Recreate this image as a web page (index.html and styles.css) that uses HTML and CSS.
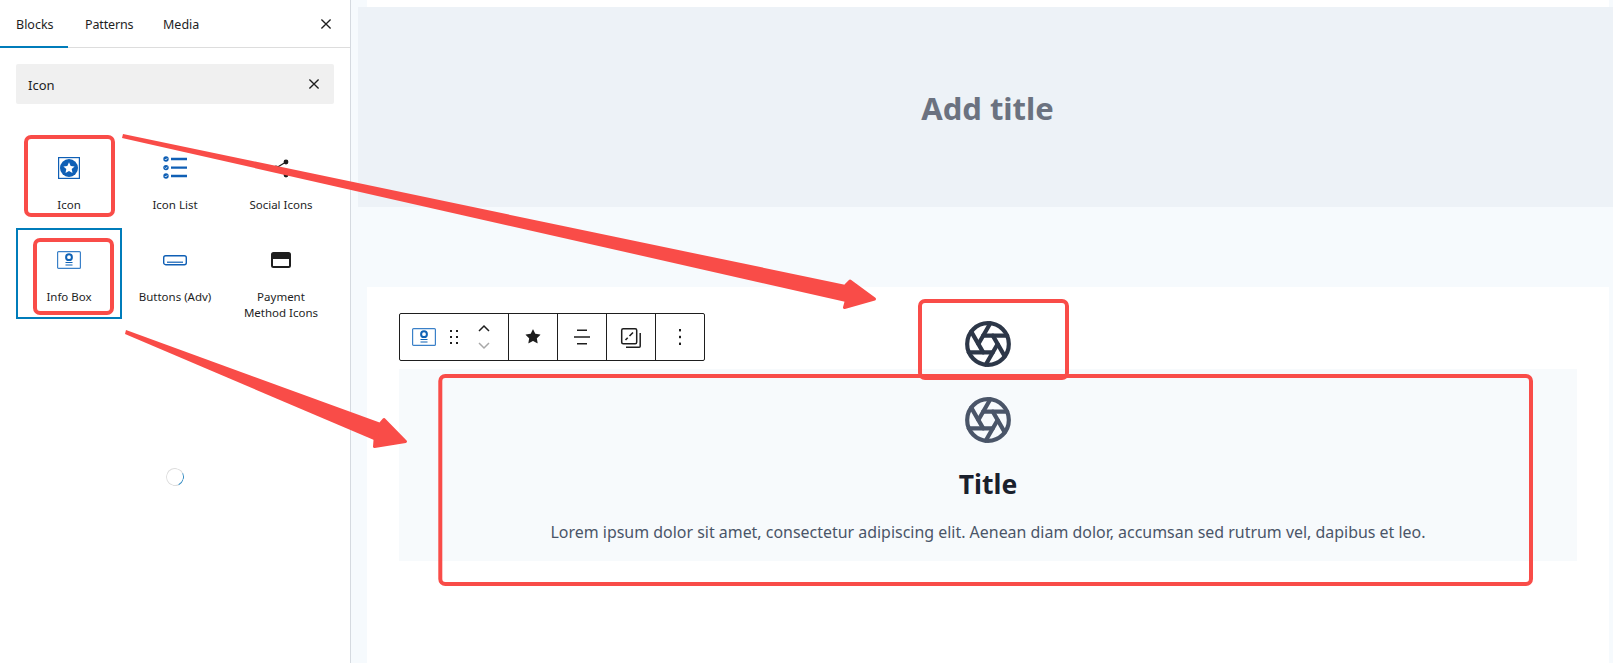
FILE: index.html
```html
<!DOCTYPE html>
<html lang="en">
<head>
<meta charset="utf-8">
<title>Block inserter</title>
<link rel="stylesheet" href="styles.css">
</head>
<body>
<svg class="defs" width="0" height="0" aria-hidden="true">
  <symbol id="aperture" viewBox="0 0 24 24">
    <g fill="none" stroke="currentColor" stroke-width="2" stroke-linecap="round" stroke-linejoin="round">
      <circle cx="12" cy="12" r="10"/>
      <line x1="14.31" y1="8" x2="20.05" y2="17.94"/>
      <line x1="9.69" y1="8" x2="21.17" y2="8"/>
      <line x1="7.38" y1="12" x2="13.12" y2="2.06"/>
      <line x1="9.69" y1="16" x2="3.95" y2="6.06"/>
      <line x1="14.31" y1="16" x2="2.83" y2="16"/>
      <line x1="16.62" y1="12" x2="10.88" y2="21.94"/>
    </g>
  </symbol>
  <symbol id="close" viewBox="0 0 24 24">
    <path d="M6.5 6.5l11 11M17.5 6.5l-11 11" fill="none" stroke="currentColor" stroke-width="1.6"/>
  </symbol>
  <symbol id="infobox" viewBox="0 0 24 18">
    <rect x=".6" y=".6" width="22.8" height="16.8" rx="1" fill="#fff" stroke="#3a80c8" stroke-width="1.2"/>
    <circle cx="12" cy="6.2" r="2.9" fill="none" stroke="#0f62b5" stroke-width="2"/>
    <path d="M8.5 11.5h7M8.5 14h7" stroke="#0f62b5" stroke-width="1.2"/>
  </symbol>
</svg>

<div class="app">
  <aside class="sidebar">
    <div class="tabs">
      <div class="tab tab-active">Blocks</div>
      <div class="tab tab-patterns">Patterns</div>
      <div class="tab tab-media">Media</div>
      <svg class="tab-close" width="20" height="20"><use href="#close"/></svg>
    </div>
    <div class="search">
      <span>Icon</span>
      <svg width="20" height="20"><use href="#close"/></svg>
    </div>
    <div class="grid">
      <div class="item">
        <svg class="item-icon" width="24" height="24" viewBox="0 0 24 24">
          <rect x="1.6" y="1.6" width="20.8" height="20.8" fill="#fff" stroke="#0f5fb5" stroke-width="1.2"/>
          <circle cx="12" cy="12" r="9" fill="#0f5fb5"/>
          <path d="M12 6.3l1.7 3.6 3.9.5-2.9 2.7.8 3.9-3.5-2-3.5 2 .8-3.9-2.9-2.7 3.9-.5z" fill="#fff"/>
        </svg>
        <div class="item-label">Icon</div>
      </div>
      <div class="item">
        <svg class="item-icon" width="24" height="24" viewBox="0 0 24 24">
          <g fill="#0f5fb5">
            <circle cx="3" cy="3" r="2.7"/><circle cx="3" cy="11.6" r="2.7"/><circle cx="3" cy="20" r="2.7"/>
          </g>
          <path d="M1.8 3l1 1 1.5-1.8M1.8 11.6l1 1 1.5-1.8M1.8 20l1 1 1.5-1.8" fill="none" stroke="#fff" stroke-width=".8"/>
          <path d="M8 3h16M8 11.6h16M8 20h16" stroke="#0f5fb5" stroke-width="2.4"/>
        </svg>
        <div class="item-label">Icon List</div>
      </div>
      <div class="item">
        <svg class="item-icon" width="24" height="24" viewBox="0 0 24 24">
          <g fill="#1e1e1e"><circle cx="17" cy="6" r="2.4"/><circle cx="7" cy="12" r="2.4"/><circle cx="17" cy="19" r="2.4"/></g>
          <path d="M17 6L7 12l10 7" fill="none" stroke="#1e1e1e" stroke-width="1.3"/>
        </svg>
        <div class="item-label">Social Icons</div>
      </div>
      <div class="item item-selected">
        <svg class="item-icon" width="24" height="18"><use href="#infobox"/></svg>
        <div class="item-label">Info Box</div>
      </div>
      <div class="item">
        <svg class="item-icon" width="24" height="24" viewBox="0 0 24 24">
          <rect x=".7" y="7.7" width="22.6" height="9" rx="2" fill="none" stroke="#0f5fb5" stroke-width="1.4"/>
          <path d="M4 14.2h16" stroke="#0f5fb5" stroke-width="1.2"/>
        </svg>
        <div class="item-label">Buttons (Adv)</div>
      </div>
      <div class="item">
        <svg class="item-icon" width="24" height="24" viewBox="0 0 24 24">
          <rect x="3" y="5" width="18" height="14" rx="1.5" fill="none" stroke="#1e1e1e" stroke-width="2"/>
          <path d="M3 8.5h18" stroke="#1e1e1e" stroke-width="5"/>
        </svg>
        <div class="item-label">Payment<br>Method Icons</div>
      </div>
    </div>
    <div class="spinner"></div>
  </aside>

  <main class="canvas">
    <div class="strip"></div>
    <div class="cover"><h1>Add title</h1></div>
    <section class="page">
      <div class="toolbar">
        <div class="tb-group tb-first">
          <svg width="24" height="18"><use href="#infobox"/></svg>
          <svg class="tb-drag" width="10" height="16" viewBox="0 0 10 16">
            <g fill="#1e1e1e">
              <rect x="0" y="1" width="2" height="2"/><rect x="6" y="1" width="2" height="2"/>
              <rect x="0" y="7" width="2" height="2"/><rect x="6" y="7" width="2" height="2"/>
              <rect x="0" y="13" width="2" height="2"/><rect x="6" y="13" width="2" height="2"/>
            </g>
          </svg>
          <svg class="tb-move" width="14" height="26" viewBox="0 0 14 26">
            <path d="M2 7l5-5 5 5" fill="none" stroke="#1e1e1e" stroke-width="1.5"/>
            <path d="M2 19l5 5 5-5" fill="none" stroke="#a8a8a8" stroke-width="1.5"/>
          </svg>
        </div>
        <div class="tb-group">
          <svg width="24" height="24" viewBox="0 0 24 24"><path fill="#1e1e1e" d="M11.776 4.454a.25.25 0 01.448 0l2.069 4.192a.25.25 0 00.188.137l4.626.672a.25.25 0 01.139.426l-3.348 3.263a.25.25 0 00-.072.222l.79 4.607a.25.25 0 01-.362.263l-4.138-2.175a.25.25 0 00-.232 0l-4.138 2.175a.25.25 0 01-.363-.263l.79-4.607a.25.25 0 00-.071-.222L4.754 9.881a.25.25 0 01.139-.426l4.626-.672a.25.25 0 00.188-.137l2.069-4.192z"/></svg>
        </div>
        <div class="tb-group">
          <svg width="24" height="24" viewBox="0 0 24 24"><path d="M7 5.2h10M4 12h16M7 18.8h10" stroke="#1e1e1e" stroke-width="1.5"/></svg>
        </div>
        <div class="tb-group">
          <svg width="24" height="24" viewBox="0 0 24 24">
            <rect x="2.7" y="3.7" width="15" height="15" rx="1.5" fill="none" stroke="#1e1e1e" stroke-width="1.5"/>
            <path d="M21.2 8v13.2a1 1 0 01-1 1H7" fill="none" stroke="#1e1e1e" stroke-width="1.5"/>
            <path d="M6.5 15l2.2-2.2M10.5 11l3.5-3.5" stroke="#1e1e1e" stroke-width="1.6"/>
          </svg>
        </div>
        <div class="tb-group tb-last">
          <svg width="4" height="16" viewBox="0 0 4 16">
            <g fill="#1e1e1e"><rect x="1" y="0" width="2" height="2.4"/><rect x="1" y="6.8" width="2" height="2.4"/><rect x="1" y="13.6" width="2" height="2.4"/></g>
          </svg>
        </div>
      </div>
      <svg class="aperture aperture-dark" width="50" height="50"><use href="#aperture"/></svg>
      <div class="infobox">
        <svg class="aperture aperture-mid" width="50" height="50"><use href="#aperture"/></svg>
        <h2>Title</h2>
        <p>Lorem ipsum dolor sit amet, consectetur adipiscing elit. Aenean diam dolor, accumsan sed rutrum vel, dapibus et leo.</p>
      </div>
    </section>
  </main>
</div>

<svg class="annotations" width="1613" height="663" viewBox="0 0 1613 663" aria-hidden="true">
  <g fill="none" stroke="#f94c48" stroke-width="4">
    <rect x="26" y="137" width="87" height="78" rx="5"/>
    <rect x="35" y="240" width="77" height="73" rx="5"/>
    <rect x="920" y="301" width="147" height="77" rx="5"/>
    <rect x="440.3" y="376" width="1090.7" height="208" rx="5"/>
  </g>
  <g fill="#f94c48" stroke="#f94c48" stroke-linejoin="round">
    <polygon stroke-width="0" points="123,134 846,285 846,302 122,138"/>
    <polygon stroke-width="3" points="850,281 874.5,299 844.5,307.5 846,302 846,285"/>
    <polygon stroke-width="0" points="126,330 381,423 374,440 125,334"/>
    <polygon stroke-width="3" points="384,419.5 405.5,441.5 374.5,446.5 375,440 381,423"/>
  </g>
</svg>
</body>
</html>
```

FILE: styles.css
```css
* { box-sizing: border-box; }

html, body {
  margin: 0;
  height: 663px;
  overflow: hidden;
  background: #fff;
}

body {
  font-family: "Noto Sans", "Open Sans", sans-serif;
  color: #1e1e1e;
}

.defs { position: absolute; }

.app {
  display: flex;
  height: 663px;
}

/* Sidebar */
.sidebar {
  flex: 0 0 351px;
  border-right: 1px solid #d5dae0;
  background: #fff;
}

.tabs {
  display: flex;
  align-items: center;
  position: relative;
  height: 48px;
  border-bottom: 1px solid #ddd;
  font-size: 12.5px;
}

.tab {
  height: 48px;
  line-height: 49px;
  padding-left: 16px;
}

.tab-active {
  width: 68px;
  border-bottom: 2px solid #007cba;
}

.tab-patterns { width: 78px; padding-left: 17px; letter-spacing: -0.15px; }
.tab-media { width: 60px; padding-left: 17px; }

.tab-close {
  position: absolute;
  left: 316px;
  top: 14px;
}

.search {
  display: flex;
  align-items: center;
  justify-content: space-between;
  height: 40px;
  margin: 16px 16px 0;
  padding: 0 10px 0 12px;
  background: #f0f0f0;
  border-radius: 2px;
  font-size: 13px;
}

.search span { padding-top: 2px; }

.grid {
  display: grid;
  grid-template-columns: repeat(3, 106px);
  grid-auto-rows: 92px;
  margin: 32px 0 0 16px;
}

.item {
  display: flex;
  flex-direction: column;
  align-items: center;
  padding-top: 20px;
  font-size: 11.5px;
  line-height: 16px;
  text-align: center;
}

.item-icon {
  display: block;
  flex: none;
  height: 24px;
}

.item-label { margin-top: 17px; }

.item-selected {
  height: 91px;
  border: 2px solid #007cba;
  padding-top: 21px;
  width: 106px;
}

.item-selected .item-label { margin-top: 16px; }
.item-selected .item-icon { height: 18px; margin-top: 0; margin-bottom: 4px; }

.spinner {
  width: 18px;
  height: 18px;
  margin: 148px auto 0;
  border-radius: 50%;
  border: 1.5px solid #ddd;
  border-right-color: #3a8fc4;
  transform: rotate(20deg);
}

/* Canvas */
.canvas {
  flex: 1;
  min-width: 0;
  background: #f6fafd;
}

.strip {
  height: 7px;
  margin: 0 4px 0 16px;
  background: #fff;
}

.cover {
  display: flex;
  align-items: center;
  justify-content: center;
  height: 200px;
  margin-left: 7px;
  padding: 2px 0 0 4px;
  background: #edf2f7;
}

.cover h1 {
  margin: 0;
  font-size: 31px;
  font-weight: 700;
  color: #6b7280;
}

.page {
  position: relative;
  height: 376px;
  margin: 80px 4px 0 16px;
  padding: 32px 32px 0;
  background: #fff;
}

.aperture {
  display: block;
  margin: 0 auto;
}

.aperture-dark { color: #2d3748; }
.aperture-mid { color: #4a5568; }

.infobox {
  height: 192px;
  padding-top: 26px;
  background: #f7fafc;
  text-align: center;
}

.infobox h2 {
  margin: 20px 0 0;
  font-size: 26.5px;
  line-height: 38px;
  font-weight: 700;
  color: #1a202c;
}

.infobox p {
  margin: 17px 0 0;
  font-size: 15.95px;
  line-height: 24px;
  color: #4a5568;
}

/* Floating block toolbar */
.toolbar {
  position: absolute;
  left: 32px;
  top: 26px;
  display: flex;
  height: 48px;
  background: #fff;
  border: 1px solid #1e1e1e;
  border-radius: 2px;
}

.tb-group {
  display: flex;
  align-items: center;
  justify-content: center;
  width: 49px;
  height: 46px;
  border-right: 1px solid #1e1e1e;
}

.tb-first {
  width: 109px;
  justify-content: flex-start;
  padding-left: 12px;
}

.tb-last { border-right: 0; width: 48px; }
.tb-drag { margin-left: 14px; }
.tb-move { margin-left: 17px; }

/* Red annotations laid over the screenshot */
.annotations {
  position: absolute;
  left: 0;
  top: 0;
  pointer-events: none;
}
```
